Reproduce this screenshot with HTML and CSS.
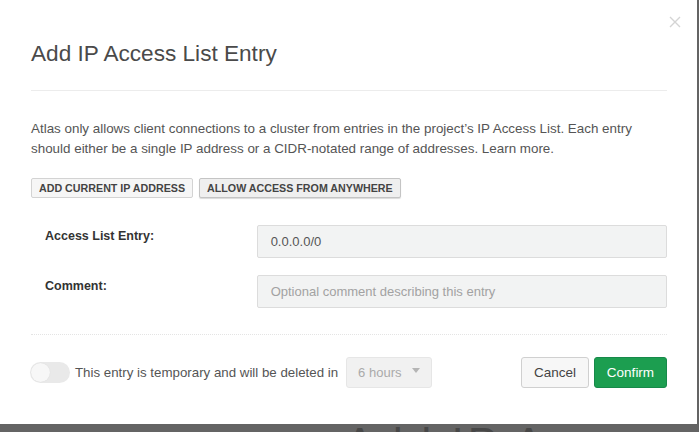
FILE: index.html
```html
<!DOCTYPE html>
<html>
<head>
<meta charset="utf-8">
<link rel="stylesheet" href="styles.css">
</head>
<body>
<div class="backdrop">
  <div class="backdrop-title">Add IP Access List Entry</div>
</div>
<div class="modal">
  <button class="close" aria-label="Close">
    <svg width="12" height="12" viewBox="0 0 12 12"><path d="M1 1L11 11M11 1L1 11" stroke="#d4d4d4" stroke-width="1.4" fill="none"/></svg>
  </button>
  <div class="header">
    <h1 class="title">Add IP Access List Entry</h1>
  </div>
  <div class="body">
    <p class="intro">Atlas only allows client connections to a cluster from entries in the project’s IP Access List. Each entry<br>should either be a single IP address or a CIDR-notated range of addresses. <span class="link">Learn more.</span></p>
    <div class="btn-row">
      <button class="btn-small">ADD CURRENT IP ADDRESS</button>
      <button class="btn-small btn-active">ALLOW ACCESS FROM ANYWHERE</button>
    </div>
    <div class="form">
      <div class="form-row">
        <label class="label">Access List Entry:</label>
        <div class="input">0.0.0.0/0</div>
      </div>
      <div class="form-row">
        <label class="label">Comment:</label>
        <div class="input placeholder">Optional comment describing this entry</div>
      </div>
    </div>
  </div>
  <div class="footer">
    <div class="temp">
      <span class="toggle"><span class="knob"></span></span>
      <span class="temp-text">This entry is temporary and will be deleted in</span>
      <span class="select">6 hours <span class="caret"></span></span>
    </div>
    <div class="actions">
      <button class="btn cancel">Cancel</button>
      <button class="btn confirm">Confirm</button>
    </div>
  </div>
</div>
</body>
</html>
```

FILE: styles.css
```css
html, body {
  margin: 0;
  padding: 0;
}
body {
  width: 699px;
  height: 432px;
  background: #646464;
  font-family: "Liberation Sans", Arial, sans-serif;
  position: relative;
  overflow: hidden;
}
.backdrop {
  position: absolute;
  left: 330px;
  top: 424px;
  width: 369px;
  height: 8px;
  overflow: hidden;
}
.backdrop-title {
  margin-top: -5px;
  margin-left: 15px;
  font-size: 44px;
  line-height: 50px;
  color: #474747;
  white-space: nowrap;
  letter-spacing: 4px;
}
.modal {
  position: relative;
  width: 697px;
  height: 424px;
  background: #fff;
  box-sizing: border-box;
  padding: 0 30px 0 31px;
  display: flex;
  flex-direction: column;
}
.close {
  position: absolute;
  top: 16px;
  left: 669px;
  border: 0;
  background: none;
  padding: 0;
  width: 12px;
  height: 12px;
  display: flex;
}
.header {
  height: 91px;
  border-bottom: 1px solid #ececec;
  box-sizing: border-box;
  display: flex;
  align-items: flex-start;
}
.title {
  margin: 41px 0 0 0;
  font-size: 22.6px;
  font-weight: 300;
  color: #4a4a4a;
  line-height: 26px;
}
.body {
  border-bottom: 1px dotted #e4e4e4;
  padding-bottom: 26px;
}
.intro {
  margin: 28px 0 0 0;
  font-size: 13.4px;
  line-height: 20px;
  color: #555;
}
.link {
  color: #555;
}
.btn-row {
  display: flex;
  gap: 6px;
  margin-top: 19px;
}
.btn-small {
  height: 20px;
  padding: 0 7px;
  font-family: "Liberation Sans", Arial, sans-serif;
  font-size: 10.7px;
  font-weight: bold;
  color: #444;
  background: #f6f6f6;
  border: 1px solid #d3d3d3;
  border-radius: 2px;
}
.btn-active {
  background: #efefef;
  border-color: #c4c4c4;
  box-shadow: 0 1px 1px rgba(0,0,0,0.15);
}
.form {
  display: flex;
  flex-direction: column;
  gap: 17px;
  margin-top: 27px;
  padding-left: 14px;
}
.form-row {
  display: flex;
  align-items: flex-start;
}
.label {
  width: 212px;
  padding-top: 4px;
  font-size: 12.5px;
  font-weight: bold;
  color: #333;
}
.input {
  width: 411px;
  height: 33px;
  box-sizing: border-box;
  background: #f2f3f3;
  border: 1px solid #dcdcdc;
  border-radius: 2px;
  padding: 0 13px;
  display: flex;
  align-items: center;
  font-size: 13px;
  color: #555;
}
.placeholder {
  color: #a2a2a2;
}
.footer {
  display: flex;
  align-items: center;
  justify-content: space-between;
  margin-top: 22px;
}
.temp {
  display: flex;
  align-items: center;
  margin-left: -1px;
}
.toggle {
  width: 40px;
  height: 21px;
  border-radius: 11px;
  background: #e9e9e9;
  display: flex;
  align-items: center;
  padding: 1px;
  box-sizing: border-box;
}
.knob {
  width: 19px;
  height: 19px;
  border-radius: 50%;
  background: #f7f7f7;
  box-shadow: 0 0 1px rgba(0,0,0,0.1);
}
.temp-text {
  margin-left: 5px;
  font-size: 13.3px;
  color: #555;
}
.select {
  margin-left: 8px;
  width: 86px;
  height: 31px;
  box-sizing: border-box;
  background: #f1f1f1;
  border: 1px solid #e6e6e6;
  border-radius: 3px;
  padding-left: 11px;
  display: flex;
  align-items: center;
  font-size: 13px;
  color: #aaa;
  position: relative;
}
.caret {
  position: absolute;
  right: 11px;
  top: 10px;
  width: 0;
  height: 0;
  border-left: 4px solid transparent;
  border-right: 4px solid transparent;
  border-top: 5px solid #b5b5b5;
}
.actions {
  display: flex;
  gap: 5px;
}
.btn {
  height: 31px;
  border-radius: 3px;
  font-family: "Liberation Sans", Arial, sans-serif;
  font-size: 13.5px;
  padding: 0 10px;
}
.cancel {
  width: 68px;
  background: #f7f7f7;
  border: 1px solid #d0d0d0;
  color: #444;
}
.confirm {
  width: 73px;
  background: #1c9e50;
  border: 1px solid #17894a;
  color: #fff;
}
```
